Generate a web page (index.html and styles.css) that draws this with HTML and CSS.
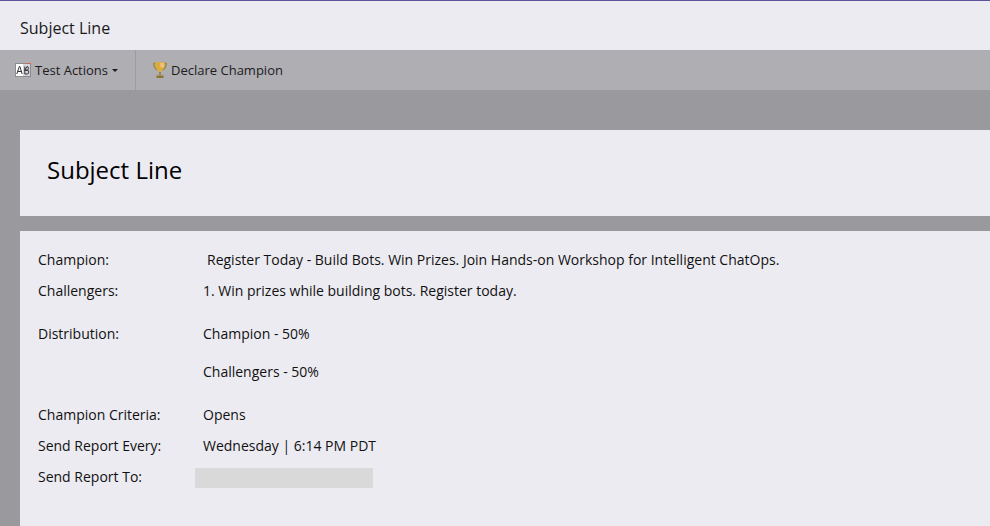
FILE: index.html
```html
<!DOCTYPE html>
<html lang="en">
<head>
	<meta charset="utf-8" />
	<title>Subject Line</title>
	<link rel="stylesheet" href="styles.css">
</head>
<body>
	<div class="page-title">Subject Line</div>
	<div class="toolbar">
		<div class="tool tool-first">
			<svg class="icon" viewBox="0 0 16 14" width="16" height="14">
				<rect x="0.5" y="0.5" width="15" height="13" fill="#fff" stroke="#8b8b92"/>
				<rect x="8" y="1" width="7" height="12" fill="#d4d6dc"/>
				<rect x="11" y="0" width="5" height="1" fill="#d8664f"/>
				<path d="M1.800 11 4.300 3.500h.6L7.200 11M3 8.500h3.200" fill="none" stroke="#333" stroke-width="1"/>
				<path d="M9.800 3.500V11h2.400q1.600 0 1.600-1.900t-1.600-1.900h-2.400m0 0h2.200q1.400 0 1.400-1.800T12 3.500z" fill="none" stroke="#333" stroke-width="1"/>
			</svg>
			<span>Test Actions</span>
			<span class="caret"></span>
		</div>
		<div class="tool">
			<svg class="icon" viewBox="0 0 14 18" width="14" height="18">
				<path d="M2.500 2.500H.8q0 5 4.200 6.500M11.500 2.500h1.700q0 5-4.200 6.500" fill="none" stroke="#a8842c" stroke-width="1.300"/>
				<path d="M2.500 1h9q.5 6-2.500 8.500-1 1-1.300 1.500h-1.400q-.3-.5-1.300-1.500Q2 7 2.500 1z" fill="#d9ae3f"/>
				<path d="M7 2h4v4q-2 1-3.500 0z" fill="#eec27a"/>
				<path d="M6.200 11h1.600v3H6.200z" fill="#9a7a2a"/>
				<path d="M3.500 14.500h7V17h-7z" fill="#8d7436"/>
			</svg>
			<span>Declare Champion</span>
		</div>
	</div>
	<div class="content">
		<div class="card card-head">
			<h1>Subject Line</h1>
		</div>
		<div class="card card-body">
			<div class="row">
				<div class="label">Champion:</div>
				<div class="value value-champion">Register Today - Build Bots. Win Prizes. Join Hands-on Workshop for Intelligent ChatOps.</div>
			</div>
			<div class="row">
				<div class="label">Challengers:</div>
				<div class="value">1. Win prizes while building bots. Register today.</div>
			</div>
			<div class="row row-dist">
				<div class="label">Distribution:</div>
				<div class="value">
					<div class="split">Champion - 50%</div>
					<div class="split">Challengers - 50%</div>
				</div>
			</div>
			<div class="row">
				<div class="label">Champion Criteria:</div>
				<div class="value">Opens</div>
			</div>
			<div class="row">
				<div class="label">Send Report Every:</div>
				<div class="value">Wednesday | 6:14 PM PDT</div>
			</div>
			<div class="row">
				<div class="label">Send Report To:</div>
				<div class="redacted"></div>
			</div>
		</div>
	</div>
</body>
</html>
```

FILE: styles.css
```css
html, body {height:100%;}
body {margin:0; padding:0; display:flex; flex-direction:column; overflow:hidden; font-family:"Open Sans",sans-serif; font-size:14px; color:#111; background:#9a999d;}

.page-title {height:49px; padding-left:20px; border-top:1px solid #5f5399; font-size:16px; line-height:55px; color:#1a1a1a; background:#ecebf1;}

.toolbar {display:flex; height:40px; background:#afaeb2;}
.tool {display:flex; align-items:center; padding:0 15px 0 17px; font-size:13px; line-height:40px; color:#1c1c1f;}
.tool-first {padding:0 17px 0 15px; border-right:1px solid #9c9ba0;}
.icon {flex:none; margin-right:4px;}
.caret {width:0; height:0; margin:1px 0 0 4px; border-top:3px solid #1c1c1f; border-left:3px solid transparent; border-right:3px solid transparent;}

.content {flex:1; display:flex; flex-direction:column; gap:15px; padding:40px 0 0 20px;}
.card {background:#ecebf1;}
.card-head {height:78px; display:flex; align-items:center; padding:0 0 8px 27px;}
.card-head h1 {margin:0; font-size:24px; font-weight:400; color:#000;}
.card-body {flex:1; padding:13px 0 0 18px;}

.row {display:flex; align-items:center; min-height:31px; color:#111;}
.row-dist {align-items:flex-start; margin-top:12px; margin-bottom:12px;}
.label {flex:none; width:165px;}
.row-dist .label {line-height:31px;}
.value-champion {padding-left:4px;}
.split {line-height:31px; margin-bottom:7px;}
.split:last-child {margin-bottom:0;}
.redacted {width:178px; height:20px; margin:2px 0 0 -8px; background:#d9d9d9;}
```
